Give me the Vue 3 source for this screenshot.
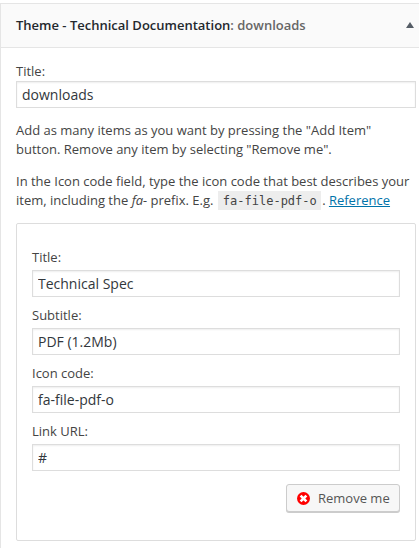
<template>
  <div class="widget">
    <!-- header -->
    <div class="widget-top">
      <h4 class="widget-title">
        {{ name }}<span class="in-widget-title">: {{ title }}</span>
      </h4>
      <svg class="toggle" width="8" height="6" viewBox="0 0 8 6">
        <path d="M4 0 L8 6 H0 Z" />
      </svg>
    </div>

    <div class="widget-inside">
      <label class="field">
        <span class="label">Title:</span>
        <input v-model="title" class="widefat" type="text" />
      </label>

      <p class="text">
        Add as many items as you want by pressing the "Add Item"<br />
        button. Remove any item by selecting "Remove me".
      </p>
      <p class="text">
        In the Icon code field, type the icon code that best describes your<br />
        item, including the <em>fa-</em> prefix. E.g. <code>fa-file-pdf-o</code> .
        <a href="#">Reference</a>
      </p>

      <!-- items -->
      <div v-for="(item, index) in items" :key="index" class="item">
        <label v-for="field in fields" :key="field.key" class="field">
          <span class="label">{{ field.label }}</span>
          <input v-model="item[field.key]" class="widefat" type="text" />
        </label>
        <button class="button" type="button" @click="removeItem(index)">
          <svg class="remove-icon" width="13" height="13" viewBox="0 0 13 13">
            <circle cx="6.5" cy="6.5" r="6.5" fill="#f00" />
            <path d="M3.6 3.6 L9.4 9.4 M9.4 3.6 L3.6 9.4" stroke="#fff" stroke-width="2.6" />
          </svg>
          <span>Remove me</span>
        </button>
      </div>
    </div>
  </div>
</template>

<script setup>
import { ref } from 'vue';

const name = 'Theme - Technical Documentation';
const title = ref('downloads');

const fields = [
  { key: 'title', label: 'Title:' },
  { key: 'subtitle', label: 'Subtitle:' },
  { key: 'icon', label: 'Icon code:' },
  { key: 'link', label: 'Link URL:' }
];

const items = ref([
  {
    title: 'Technical Spec',
    subtitle: 'PDF (1.2Mb)',
    icon: 'fa-file-pdf-o',
    link: '#'
  }
]);

const removeItem = (index) => {
  items.value.splice(index, 1);
};
</script>

<style>
body {
  background: #fff;
  overflow: hidden;
}
</style>

<style scoped>
.widget {
  box-sizing: border-box;
  height: 545px;
  margin-top: 3px;
  border-top: 1px solid #e5e5e5;
  border-left: 1px solid #e5e5e5;
  font-family: "Open Sans", sans-serif;
  font-size: 13px;
  line-height: 19px;
  color: #444;
}

.widget-top {
  display: flex;
  align-items: center;
  justify-content: space-between;
  height: 43px;
  padding: 0 5px 0 15px;
  border-bottom: 1px solid #e5e5e5;
  background: #fafafa;
}

.widget-title {
  margin: 0;
  font-size: 13px;
  font-weight: 600;
  color: #23282d;
}

.in-widget-title {
  color: #666;
}

.toggle {
  margin-bottom: 1px;
  fill: #555d66;
}

.widget-inside {
  padding: 14px 3px 0 15px;
}

.field {
  display: block;
}

.label {
  display: block;
}

.widefat {
  display: block;
  box-sizing: border-box;
  width: 100%;
  height: 27px;
  margin: 0;
  padding: 3px 5px;
  border: 1px solid #ddd;
  border-radius: 0;
  outline: none;
  background: #fff;
  box-shadow: inset 0 1px 2px rgba(0, 0, 0, 0.07);
  font-family: inherit;
  font-size: 14px;
  color: #32373c;
}

.text {
  margin: 13px 0;
  white-space: nowrap;
}

code {
  padding: 3px 4px 2px 5px;
  margin: 0 -2px 0 1px;
  background: #ededed;
  font-family: "DejaVu Sans Mono", monospace;
  font-size: 12px;
  line-height: 1;
}

a {
  color: #0073aa;
}

.item {
  display: flex;
  flex-direction: column;
  gap: 9px;
  padding: 24px 15px 27px;
  border: 1px solid #ddd;
  border-radius: 2px;
}

.item .label {
  margin-bottom: 3px;
}

.button {
  display: flex;
  align-items: center;
  align-self: flex-end;
  gap: 8px;
  box-sizing: border-box;
  width: 114px;
  height: 28px;
  margin: 4px 0 1px;
  padding: 0 9px 0 10px;
  border: 1px solid #ccc;
  border-radius: 3px;
  background: #f7f7f7;
  box-shadow: 0 1px 0 #ccc;
  font-family: inherit;
  font-size: 13px;
  color: #555;
  white-space: nowrap;
  cursor: pointer;
}

.remove-icon {
  flex: none;
}
</style>
